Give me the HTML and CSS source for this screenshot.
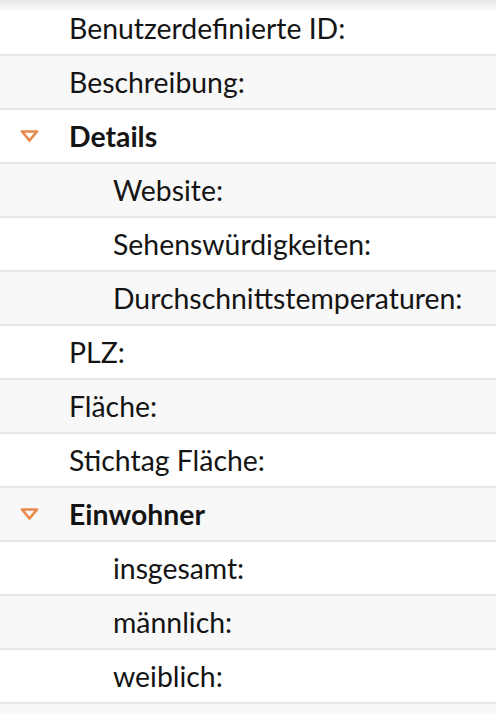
FILE: index.html
```html
<!DOCTYPE html>
<html lang="de">
<head>
<meta charset="utf-8">
<link rel="stylesheet" href="styles.css">
</head>
<body>
<div class="shade"></div>
<ul class="list">
  <li class="row l1">Benutzerdefinierte ID:</li>
  <li class="row l1">Beschreibung:</li>
  <li class="row group"><svg class="tri" viewBox="0 0 19 12" width="19" height="12"><path d="M2 1.5 H17 L9.5 10.5 Z" fill="none" stroke="#e8894c" stroke-width="2.7" stroke-linejoin="round"/></svg><b>Details</b></li>
  <li class="row l2">Website:</li>
  <li class="row l2">Sehenswürdigkeiten:</li>
  <li class="row l2">Durchschnittstemperaturen:</li>
  <li class="row l1">PLZ:</li>
  <li class="row l1">Fläche:</li>
  <li class="row l1">Stichtag Fläche:</li>
  <li class="row group"><svg class="tri" viewBox="0 0 19 12" width="19" height="12"><path d="M2 1.5 H17 L9.5 10.5 Z" fill="none" stroke="#e8894c" stroke-width="2.7" stroke-linejoin="round"/></svg><b>Einwohner</b></li>
  <li class="row l2">insgesamt:</li>
  <li class="row l2">männlich:</li>
  <li class="row l2">weiblich:</li>
  <li class="row l2"></li>
</ul>
</body>
</html>
```
FILE: styles.css
```css
html, body {
  margin: 0;
  padding: 0;
  background: #ffffff;
  overflow: hidden;
}
body {
  font-family: Lato, "Liberation Sans", sans-serif;
  color: #141414;
  font-size: 28.4px;
}
.shade {
  position: fixed;
  top: 0;
  left: 0;
  right: 0;
  height: 12px;
  background: linear-gradient(to bottom, rgba(0,0,0,0.10), rgba(0,0,0,0));
  z-index: 2;
}
.list {
  list-style: none;
  margin: 0;
  padding: 2px 0 0 0;
}
.row {
  height: 52px;
  border-bottom: 2px solid #e8e8e8;
  display: flex;
  align-items: center;
  background: #ffffff;
}
.row:nth-child(even) {
  background: #f8f8f8;
}
.l1 { padding-left: 69px; }
.l2 { padding-left: 113px; }
.group { padding-left: 20px; }
.group b { font-weight: 700; margin-left: 30px; }
.tri { display: block; flex: none; }
```
